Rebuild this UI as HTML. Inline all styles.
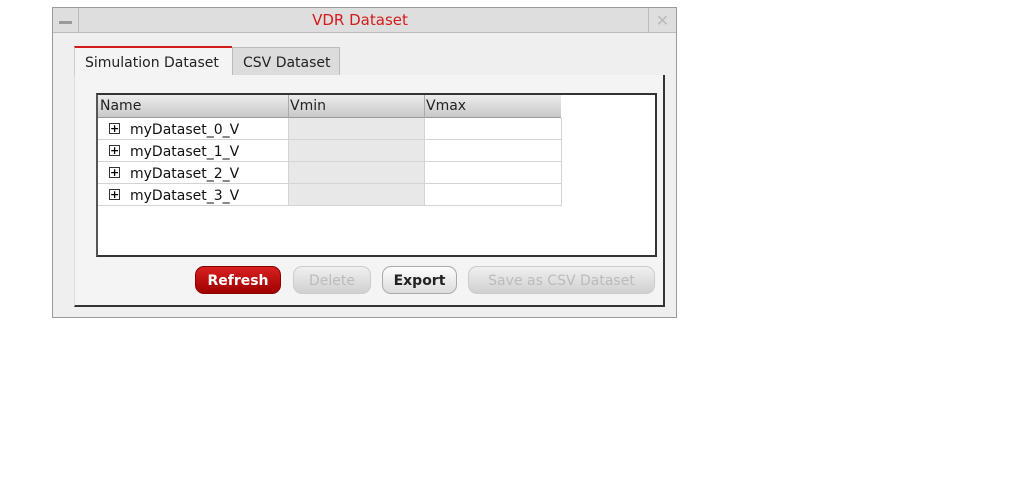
<!DOCTYPE html>
<html><head><style>
body{margin:0;width:1013px;height:488px;background:#fff;font-family:"DejaVu Sans","Liberation Sans",sans-serif;position:relative;overflow:hidden}
.a{position:absolute;box-sizing:border-box}
.btn{position:absolute;height:28px;top:266px;border-radius:9px;font-size:14px;font-weight:bold;text-align:center;line-height:28px;box-sizing:border-box}
.cell{position:absolute;height:22px;box-sizing:border-box;border-bottom:1px solid #d4d4d4;border-right:1px solid #d4d4d4;font-size:14px;line-height:24px;color:#111}
</style></head><body>
<div class="a" style="left:52px;top:7px;width:625px;height:311px;background:#efefef;border:1px solid #9a9a9a"></div>
<div class="a" style="left:53px;top:8px;width:623px;height:25px;background:#dedede;border-bottom:1px solid #bbb"></div>
<div class="a" style="left:53px;top:8px;width:26px;height:25px;border-right:1px solid #bbb"></div>
<div class="a" style="left:59px;top:21px;width:13px;height:3px;background:#9a9a9a"></div>
<div class="a" style="left:648px;top:8px;width:28px;height:25px;border-left:1px solid #bbb;color:#bbb;font-size:16px;text-align:center;line-height:25px">✕</div>
<div class="a" style="left:250px;top:9px;width:220px;text-align:center;color:#d41a1a;font-size:15px;line-height:22px">VDR Dataset</div>
<div class="a" style="left:74px;top:46px;width:158px;height:30px;background:#f4f4f4;border-top:2px solid #d41a1a;border-left:1px solid #ccc;font-size:14px;line-height:30px;padding-left:10px;color:#222">Simulation Dataset</div>
<div class="a" style="left:232px;top:47px;width:108px;height:28px;background:#dcdcdc;border:1px solid #bbb;border-bottom:none;font-size:14px;line-height:30px;padding-left:10px;color:#222">CSV Dataset</div>
<div class="a" style="left:74px;top:75px;width:591px;height:232px;background:#f4f4f4;border-right:2px solid #333;border-bottom:2px solid #333;border-left:1px solid #ddd"></div>
<div class="a" style="left:96px;top:93px;width:561px;height:164px;background:#fff;border:2px solid #333;border-left-color:#555"></div>
<div class="a" style="left:98px;top:95px;width:463px;height:23px;background:linear-gradient(#ececec,#c9c9c9);border-bottom:1px solid #999"></div>
<div class="a" style="left:100px;top:98px;font-size:14px;color:#222">Name</div>
<div class="a" style="left:288px;top:95px;height:23px;border-left:1px solid #aaa"></div>
<div class="a" style="left:424px;top:95px;height:23px;border-left:1px solid #aaa"></div>
<div class="a" style="left:290px;top:98px;font-size:14px;color:#222">Vmin</div>
<div class="a" style="left:426px;top:98px;font-size:14px;color:#222">Vmax</div>
<div id="rows"></div>
<script>
var h='';for(var i=0;i<4;i++){var t=118+i*22;
h+='<div class="cell" style="left:98px;top:'+t+'px;width:191px;padding-left:32px">myDataset_'+i+'_V</div>';
h+='<div class="a" style="left:109px;top:'+(t+5)+'px;width:11px;height:11px;border:1px solid #333;font-size:11px;line-height:9px;text-align:center;font-weight:bold">+</div>';
h+='<div class="cell" style="left:289px;top:'+t+'px;width:136px;background:#e8e8e8"></div>';
h+='<div class="cell" style="left:425px;top:'+t+'px;width:137px"></div>';}
document.getElementById('rows').innerHTML=h;
</script>
<div class="btn" style="left:195px;width:86px;background:linear-gradient(#d82020,#a00000);color:#fff;border:1px solid #800">Refresh</div>
<div class="btn" style="left:293px;width:78px;background:linear-gradient(#f0f0f0,#d0d0d0);color:#bbb;border:1px solid #ccc;font-weight:normal">Delete</div>
<div class="btn" style="left:382px;width:75px;background:linear-gradient(#fdfdfd,#dcdcdc);color:#222;border:1px solid #aaa">Export</div>
<div class="btn" style="left:468px;width:187px;background:linear-gradient(#f0f0f0,#d0d0d0);color:#bbb;border:1px solid #ccc;font-weight:normal">Save as CSV Dataset</div>
</body></html>
